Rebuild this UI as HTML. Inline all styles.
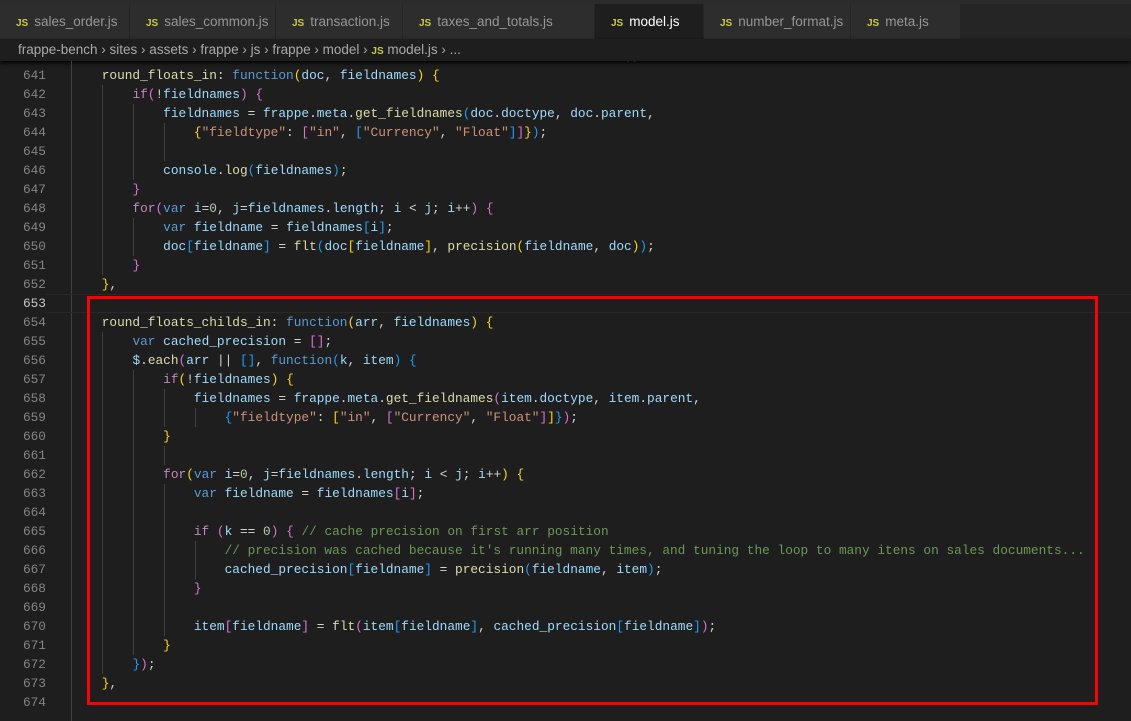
<!DOCTYPE html>
<html><head><meta charset="utf-8"><style>
*{margin:0;padding:0;box-sizing:border-box}
body{width:1131px;height:713px;background:#1e1e1e;overflow:hidden;position:relative;font-family:"Liberation Sans",sans-serif}
#tabs{position:absolute;left:0;top:0;width:1131px;height:39px;background:#252526;border-top:4px solid #2b2b2b}
.tab{position:absolute;top:0;height:35px;background:#2d2d2d;border-right:1px solid #252526;color:#969696;font-size:13.5px;line-height:35px;padding-left:16px}
.tab b{color:#cbcb41;font-size:10px;font-weight:bold;margin-right:6px;font-family:"Liberation Sans",sans-serif}
.tab.act{background:#1e1e1e;color:#fff}
#crumb{position:absolute;top:39px;left:0;width:1131px;height:22px;background:#1e1e1e;color:#a9a9a9;font-size:13.5px;line-height:22px;padding-left:18px;box-shadow:0 2px 4px #000}
#crumb b{color:#cbcb41;font-size:10px}
#code{position:absolute;left:0;top:66px;width:1131px}
.l{position:absolute;left:0;height:19px;width:1131px;font-family:"Liberation Mono",monospace;font-size:12.8px;line-height:19px;white-space:pre;color:#d4d4d4}
.n{position:absolute;left:0;width:46px;text-align:right;color:#858585}
.c{position:absolute;left:71px}
.g{position:absolute;top:0;height:19px;width:1px;background:#404040}
.k{color:#569cd6}.f{color:#dcdcaa}.v{color:#9cdcfe}.s{color:#ce9178}.m{color:#6a9955}.p{color:#c586c0}.y{color:#ffd700}.o{color:#da70d6}.b{color:#179fff}.nm{color:#b5cea8}
#box{position:absolute;left:87px;top:296px;width:1011px;height:409px;border:3px solid #f00}
</style></head><body>
<div id="tabs">
<div class="tab" style="left:0;width:130px"><b>JS</b>sales_order.js</div>
<div class="tab" style="left:130px;width:146px"><b>JS</b>sales_common.js</div>
<div class="tab" style="left:276px;width:127px"><b>JS</b>transaction.js</div>
<div class="tab" style="left:403px;width:192px"><b>JS</b>taxes_and_totals.js</div>
<div class="tab act" style="left:595px;width:109px"><b>JS</b>model.js <span style="margin-left:14px;font-size:15px">✕</span></div>
<div class="tab" style="left:704px;width:147px"><b>JS</b>number_format.js</div>
<div class="tab" style="left:851px;width:110px"><b>JS</b>meta.js</div>
</div>
<div id="crumb">frappe-bench › sites › assets › frappe › js › frappe › model › <b>JS</b> model.js › ...</div>
<div id="code">
<div style="position:absolute;left:71px;top:-5px;width:1px;height:660px;background:#404040"></div>
<div style="position:absolute;left:46px;top:228px;width:1085px;height:19px;border-top:1px solid #282828;border-bottom:1px solid #282828"></div>
<div id="lines"></div>
</div>
<div id="box"></div>
<script>
var L=[
[641,0,'<span class="f">round_floats_in</span>: <span class="k">function</span><span class="y">(</span><span class="v">doc</span>, <span class="v">fieldnames</span><span class="y">)</span> <span class="y">{</span>'],
[642,1,'<span class="p">if</span><span class="o">(</span>!<span class="v">fieldnames</span><span class="o">)</span> <span class="o">{</span>'],
[643,2,'<span class="v">fieldnames</span> = <span class="v">frappe</span>.<span class="v">meta</span>.<span class="f">get_fieldnames</span><span class="b">(</span><span class="v">doc</span>.<span class="v">doctype</span>, <span class="v">doc</span>.<span class="v">parent</span>,'],
[644,3,'<span class="y">{</span><span class="s">"fieldtype"</span>: <span class="o">[</span><span class="s">"in"</span>, <span class="b">[</span><span class="s">"Currency"</span>, <span class="s">"Float"</span><span class="b">]</span><span class="o">]</span><span class="y">}</span><span class="b">)</span>;'],
[645,3,''],
[646,2,'<span class="v">console</span>.<span class="f">log</span><span class="b">(</span><span class="v">fieldnames</span><span class="b">)</span>;'],
[647,1,'<span class="o">}</span>'],
[648,1,'<span class="p">for</span><span class="o">(</span><span class="k">var</span> <span class="v">i</span>=<span class="nm">0</span>, <span class="v">j</span>=<span class="v">fieldnames</span>.<span class="v">length</span>; <span class="v">i</span> &lt; <span class="v">j</span>; <span class="v">i</span>++<span class="o">)</span> <span class="o">{</span>'],
[649,2,'<span class="k">var</span> <span class="v">fieldname</span> = <span class="v">fieldnames</span><span class="b">[</span><span class="v">i</span><span class="b">]</span>;'],
[650,2,'<span class="v">doc</span><span class="b">[</span><span class="v">fieldname</span><span class="b">]</span> = <span class="f">flt</span><span class="b">(</span><span class="v">doc</span><span class="y">[</span><span class="v">fieldname</span><span class="y">]</span>, <span class="f">precision</span><span class="y">(</span><span class="v">fieldname</span>, <span class="v">doc</span><span class="y">)</span><span class="b">)</span>;'],
[651,1,'<span class="o">}</span>'],
[652,0,'<span class="y">}</span>,'],
[653,0,''],
[654,0,'<span class="f">round_floats_childs_in</span>: <span class="k">function</span><span class="y">(</span><span class="v">arr</span>, <span class="v">fieldnames</span><span class="y">)</span> <span class="y">{</span>'],
[655,1,'<span class="k">var</span> <span class="v">cached_precision</span> = <span class="o">[]</span>;'],
[656,1,'<span class="v">$</span>.<span class="f">each</span><span class="o">(</span><span class="v">arr</span> || <span class="b">[]</span>, <span class="k">function</span><span class="b">(</span><span class="v">k</span>, <span class="v">item</span><span class="b">)</span> <span class="b">{</span>'],
[657,2,'<span class="p">if</span><span class="y">(</span>!<span class="v">fieldnames</span><span class="y">)</span> <span class="y">{</span>'],
[658,3,'<span class="v">fieldnames</span> = <span class="v">frappe</span>.<span class="v">meta</span>.<span class="f">get_fieldnames</span><span class="o">(</span><span class="v">item</span>.<span class="v">doctype</span>, <span class="v">item</span>.<span class="v">parent</span>,'],
[659,4,'<span class="b">{</span><span class="s">"fieldtype"</span>: <span class="y">[</span><span class="s">"in"</span>, <span class="o">[</span><span class="s">"Currency"</span>, <span class="s">"Float"</span><span class="o">]</span><span class="y">]</span><span class="b">}</span><span class="o">)</span>;'],
[660,2,'<span class="y">}</span>'],
[661,2,''],
[662,2,'<span class="p">for</span><span class="y">(</span><span class="k">var</span> <span class="v">i</span>=<span class="nm">0</span>, <span class="v">j</span>=<span class="v">fieldnames</span>.<span class="v">length</span>; <span class="v">i</span> &lt; <span class="v">j</span>; <span class="v">i</span>++<span class="y">)</span> <span class="y">{</span>'],
[663,3,'<span class="k">var</span> <span class="v">fieldname</span> = <span class="v">fieldnames</span><span class="o">[</span><span class="v">i</span><span class="o">]</span>;'],
[664,3,''],
[665,3,'<span class="p">if</span> <span class="o">(</span><span class="v">k</span> == <span class="nm">0</span><span class="o">)</span> <span class="o">{</span> <span class="m">// cache precision on first arr position</span>'],
[666,4,'<span class="m">// precision was cached because it\'s running many times, and tuning the loop to many itens on sales documents...</span>'],
[667,4,'<span class="v">cached_precision</span><span class="b">[</span><span class="v">fieldname</span><span class="b">]</span> = <span class="f">precision</span><span class="b">(</span><span class="v">fieldname</span>, <span class="v">item</span><span class="b">)</span>;'],
[668,3,'<span class="o">}</span>'],
[669,3,''],
[670,3,'<span class="v">item</span><span class="o">[</span><span class="v">fieldname</span><span class="o">]</span> = <span class="f">flt</span><span class="o">(</span><span class="v">item</span><span class="b">[</span><span class="v">fieldname</span><span class="b">]</span>, <span class="v">cached_precision</span><span class="b">[</span><span class="v">fieldname</span><span class="b">]</span><span class="o">)</span>;'],
[671,2,'<span class="y">}</span>'],
[672,1,'<span class="b">}</span><span class="o">)</span>;'],
[673,0,'<span class="y">}</span>,'],
[674,0,'']
];
var guides={641:0,642:1,643:2,644:3,645:3,646:2,647:1,648:1,649:2,650:2,651:1,652:0,653:0,654:0,655:1,656:1,657:2,658:3,659:4,660:2,661:3,662:2,663:3,664:3,665:3,666:4,667:4,668:3,669:3,670:3,671:2,672:1,673:0,674:0};
var h='';
L.forEach(function(r,i){
 var ind=r[1],gc=guides[r[0]],g='';
 for(var k=1;k<=gc;k++)g+='<div class="g" style="left:'+(71+k*31)+'px"></div>';
 h+='<div class="l" style="top:'+(i*19)+'px"><span class="n"'+(r[0]==653?' style="color:#c6c6c6"':'')+'>'+r[0]+'</span>'+g+'<span class="c">'+'    '.repeat(ind+1)+r[2]+'</span></div>';
});
document.getElementById('lines').innerHTML=h;
</script>
</body></html>
